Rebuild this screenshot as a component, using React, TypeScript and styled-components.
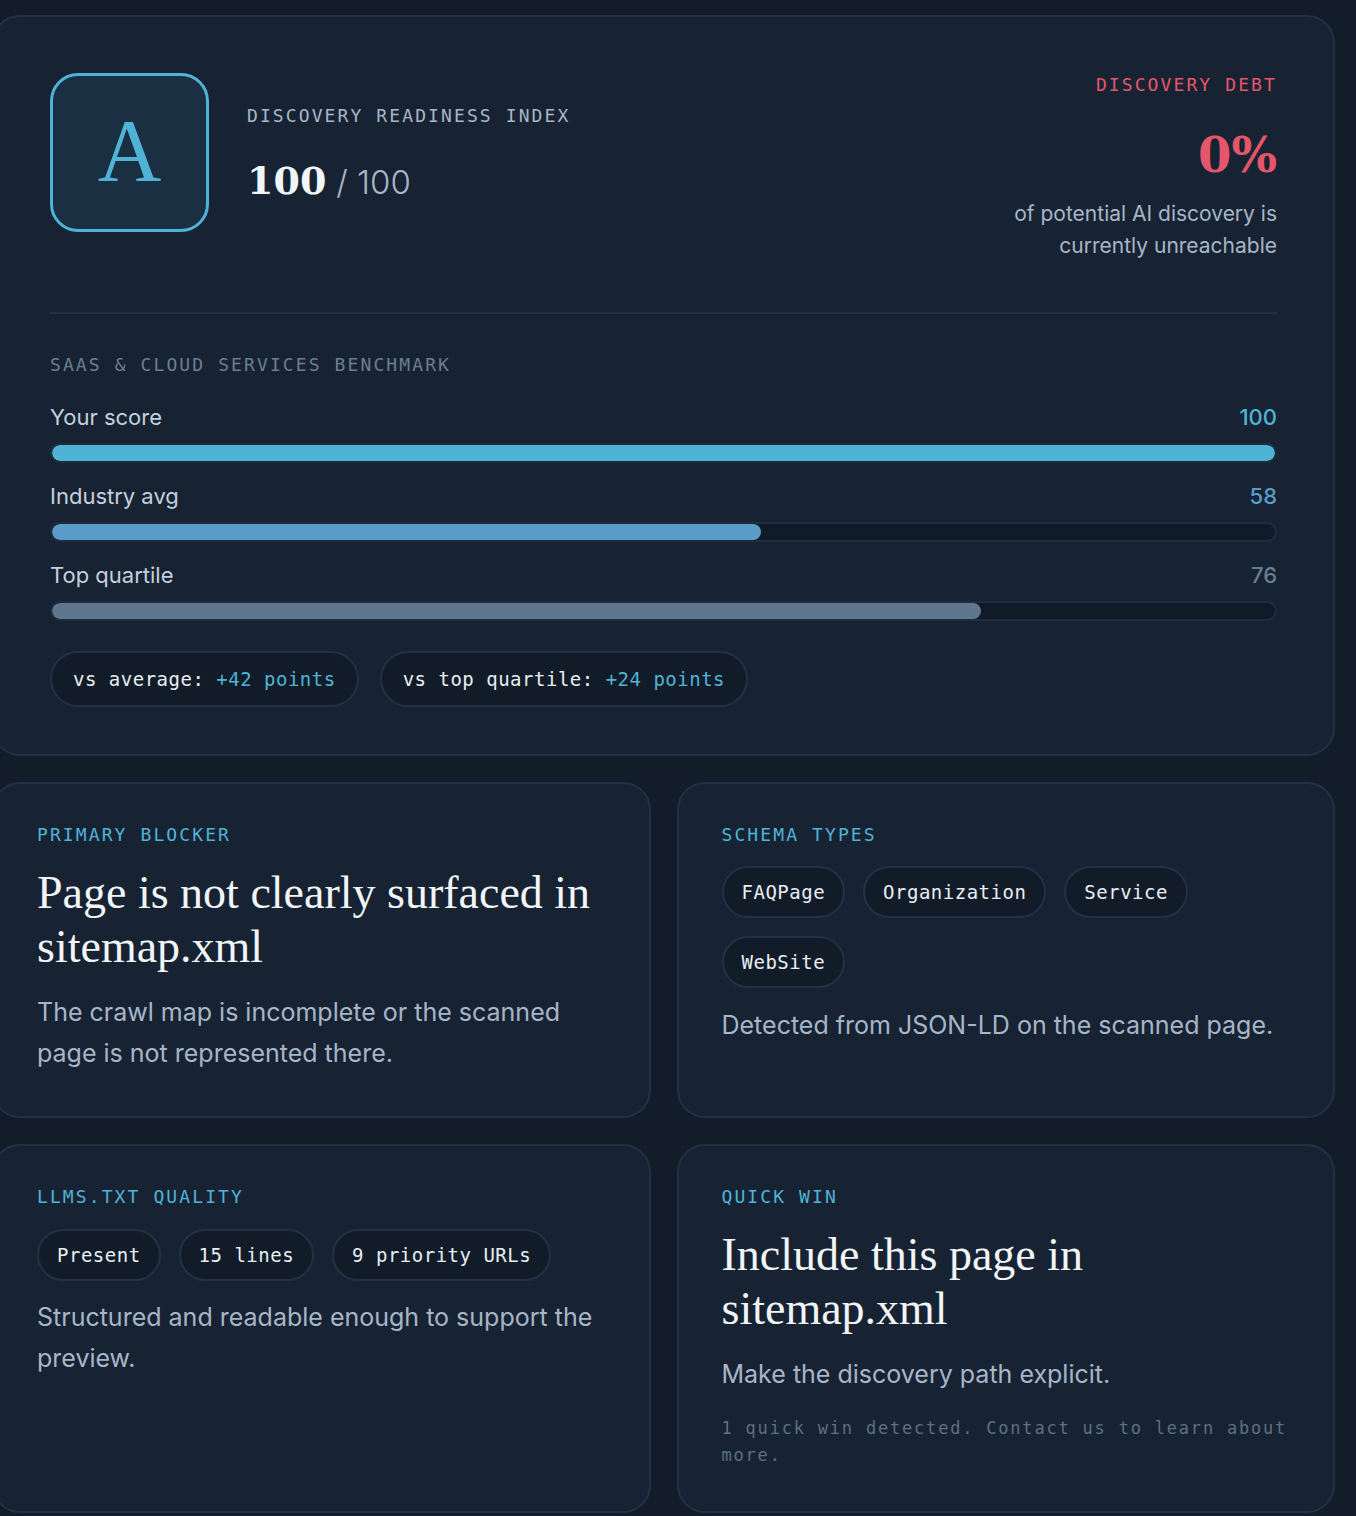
import React from 'react';
import styled, { createGlobalStyle } from 'styled-components';

const palette = {
	page: '#131d29',
	card: '#172333',
	line: '#213247',
	chip: '#121c28',
	track: '#111b27',
	cyan: '#4fb3d6',
	steel: '#5b9bc9',
	slate: '#5f778e',
	red: '#e5566a',
	white: '#f2f5f8',
	text: '#a7b6c7',
	soft: '#c5d0dc',
	dim: '#6b7e92',
	note: '#5d6f83',
};

const sans = `'Inter', 'Roboto', sans-serif`;
const mono = `'DejaVu Sans Mono', 'Liberation Mono', monospace`;
const serif = `'Liberation Serif', 'Times New Roman', serif`;
const numeral = `'DejaVu Serif', 'Liberation Serif', serif`;

const GlobalStyle = createGlobalStyle`
	html, body {
		margin: 0;
		padding: 0;
		background: ${palette.page};
	}
	body {
		font-family: ${sans};
		color: ${palette.text};
		-webkit-font-smoothing: antialiased;
	}
	* {
		box-sizing: border-box;
	}
`;

const Page = styled.div`
	margin-left: -8px;
	padding: 15px 21px 7px 0;
	display: flex;
	flex-direction: column;
	gap: 26px;
`;

const Card = styled.section<{ $hero?: boolean }>`
	background: ${palette.card};
	border: 2px solid ${palette.line};
	border-radius: 28px;
	padding: ${(p) => (p.$hero ? '56px 56px 47px' : '41px 43px 42px')};
	display: flex;
	flex-direction: column;
`;

const Grid = styled.div`
	display: grid;
	grid-template-columns: 1fr 1fr;
	gap: 26px;
`;

const Header = styled.div`
	display: flex;
	justify-content: space-between;
	align-items: flex-start;
	padding-bottom: 50px;
	border-bottom: 2px solid ${palette.line};
`;

const GradeGroup = styled.div`
	display: flex;
	align-items: center;
	gap: 38px;
`;

const GradeBox = styled.div`
	width: 159px;
	height: 159px;
	border: 3px solid ${palette.cyan};
	border-radius: 28px;
	background: #1b2f43;
	display: flex;
	align-items: center;
	justify-content: center;
	font-family: ${serif};
	font-size: 88px;
	line-height: 1;
	color: ${palette.cyan};
	padding-bottom: 4px;
`;

const ScoreBlock = styled.div`
	display: flex;
	flex-direction: column;
	gap: 36px;
`;

const Label = styled.div<{ $tone?: 'cyan' | 'red' | 'muted' | 'dim' }>`
	font-family: ${mono};
	font-size: 18px;
	line-height: 20px;
	letter-spacing: 2.1px;
	text-transform: uppercase;
	color: ${(p) =>
		p.$tone === 'cyan'
			? palette.cyan
			: p.$tone === 'red'
				? palette.red
				: p.$tone === 'dim'
					? palette.dim
					: palette.text};
`;

const Score = styled.div`
	display: flex;
	align-items: baseline;
	gap: 10px;
	line-height: 1;
`;

const ScoreValue = styled.span`
	font-family: ${numeral};
	font-weight: 700;
	font-size: 38px;
	color: ${palette.white};
`;

const ScoreMax = styled.span`
	font-family: ${sans};
	font-weight: 300;
	font-size: 33px;
	color: ${palette.text};
`;

const Debt = styled.div`
	text-align: right;
	display: flex;
	flex-direction: column;
	align-items: flex-end;
	padding-top: 2px;
`;

const DebtValue = styled.div`
	font-family: ${numeral};
	font-weight: 700;
	font-size: 48px;
	line-height: 1;
	color: ${palette.red};
	margin-top: 36px;
`;

const DebtText = styled.p`
	margin: 19px 0 0;
	font-size: 21px;
	line-height: 32px;
	color: ${palette.text};
`;

const Benchmark = styled.div`
	padding-top: 41px;
	display: flex;
	flex-direction: column;
`;

const Bars = styled.div`
	margin-top: 27px;
	display: flex;
	flex-direction: column;
	gap: 18px;
`;

const BarRow = styled.div`
	display: flex;
	flex-direction: column;
	gap: 11px;
`;

const BarHead = styled.div`
	display: flex;
	justify-content: space-between;
	align-items: center;
	height: 30px;
	font-size: 22px;
	color: ${palette.soft};
`;

const BarValue = styled.span<{ $color: string }>`
	font-weight: 500;
	color: ${(p) => p.$color};
`;

const Track = styled.div`
	height: 20px;
	border: 2px solid #1d2d40;
	border-radius: 10px;
	background: ${palette.track};
	overflow: hidden;
`;

const Fill = styled.div<{ $color: string }>`
	height: 100%;
	border-radius: 8px;
	background: ${(p) => p.$color};
`;

const ChipRow = styled.div<{ $gap?: number }>`
	display: flex;
	flex-wrap: wrap;
	gap: ${(p) => p.$gap ?? 18}px;
`;

const Chip = styled.span<{ $large?: boolean }>`
	display: inline-flex;
	align-items: center;
	height: ${(p) => (p.$large ? 56 : 52)}px;
	padding: 0 ${(p) => (p.$large ? 21 : 18)}px;
	border: 2px solid ${palette.line};
	border-radius: 30px;
	background: ${palette.chip};
	font-family: ${mono};
	font-size: 19px;
	letter-spacing: 0.5px;
	color: #e8eef4;
	white-space: pre;
`;

const Accent = styled.span`
	color: ${palette.cyan};
`;

const Title = styled.h2`
	margin: 21px 0 0;
	font-family: ${serif};
	font-weight: 400;
	font-size: 46px;
	line-height: 54px;
	color: ${palette.white};
`;

const Body = styled.p<{ $gap?: number }>`
	margin: ${(p) => p.$gap ?? 18}px 0 0;
	font-size: 25px;
	line-height: 41px;
	color: ${palette.text};
`;

const Note = styled.p`
	margin: 20px 0 0;
	font-family: ${mono};
	font-size: 17px;
	line-height: 27px;
	letter-spacing: 1.8px;
	color: ${palette.note};
`;

const bars = [
	{ label: 'Your score', value: 100, color: palette.cyan, valueColor: palette.cyan },
	{ label: 'Industry avg', value: 58, color: palette.steel, valueColor: palette.steel },
	{ label: 'Top quartile', value: 76, color: palette.slate, valueColor: '#6a7d92' },
];

const schemaTypes = ['FAQPage', 'Organization', 'Service', 'WebSite'];
const llmsFacts = ['Present', '15 lines', '9 priority URLs'];

const App: React.FC = () => {
	return (
		<>
			<GlobalStyle />
			<Page>
				<Card $hero>
					<Header>
						<GradeGroup>
							<GradeBox>A</GradeBox>
							<ScoreBlock>
								<Label>Discovery Readiness Index</Label>
								<Score>
									<ScoreValue>100</ScoreValue>
									<ScoreMax>/ 100</ScoreMax>
								</Score>
							</ScoreBlock>
						</GradeGroup>
						<Debt>
							<Label $tone="red">Discovery Debt</Label>
							<DebtValue>0%</DebtValue>
							<DebtText>
								of potential AI discovery is
								<br />
								currently unreachable
							</DebtText>
						</Debt>
					</Header>

					<Benchmark>
						<Label $tone="dim">SaaS &amp; Cloud Services Benchmark</Label>
						<Bars>
							{bars.map((bar) => (
								<BarRow key={bar.label}>
									<BarHead>
										<span>{bar.label}</span>
										<BarValue $color={bar.valueColor}>{bar.value}</BarValue>
									</BarHead>
									<Track>
										<Fill $color={bar.color} style={{ width: `${bar.value}%` }} />
									</Track>
								</BarRow>
							))}
						</Bars>
						<ChipRow $gap={21} style={{ marginTop: 30 }}>
							<Chip $large>
								vs average: <Accent>+42 points</Accent>
							</Chip>
							<Chip $large>
								vs top quartile: <Accent>+24 points</Accent>
							</Chip>
						</ChipRow>
					</Benchmark>
				</Card>

				<Grid>
					<Card>
						<Label $tone="cyan">Primary Blocker</Label>
						<Title>Page is not clearly surfaced in sitemap.xml</Title>
						<Body>The crawl map is incomplete or the scanned page is not represented there.</Body>
					</Card>
					<Card>
						<Label $tone="cyan">Schema Types</Label>
						<ChipRow style={{ marginTop: 21 }}>
							{schemaTypes.map((type) => (
								<Chip key={type}>{type}</Chip>
							))}
						</ChipRow>
						<Body $gap={17}>Detected from JSON-LD on the scanned page.</Body>
					</Card>
				</Grid>

				<Grid>
					<Card>
						<Label $tone="cyan">llms.txt Quality</Label>
						<ChipRow style={{ marginTop: 22 }}>
							{llmsFacts.map((fact) => (
								<Chip key={fact}>{fact}</Chip>
							))}
						</ChipRow>
						<Body $gap={16}>Structured and readable enough to support the preview.</Body>
					</Card>
					<Card>
						<Label $tone="cyan">Quick Win</Label>
						<Title>Include this page in sitemap.xml</Title>
						<Body>Make the discovery path explicit.</Body>
						<Note>1 quick win detected. Contact us to learn about more.</Note>
					</Card>
				</Grid>
			</Page>
		</>
	);
};

export default App;
